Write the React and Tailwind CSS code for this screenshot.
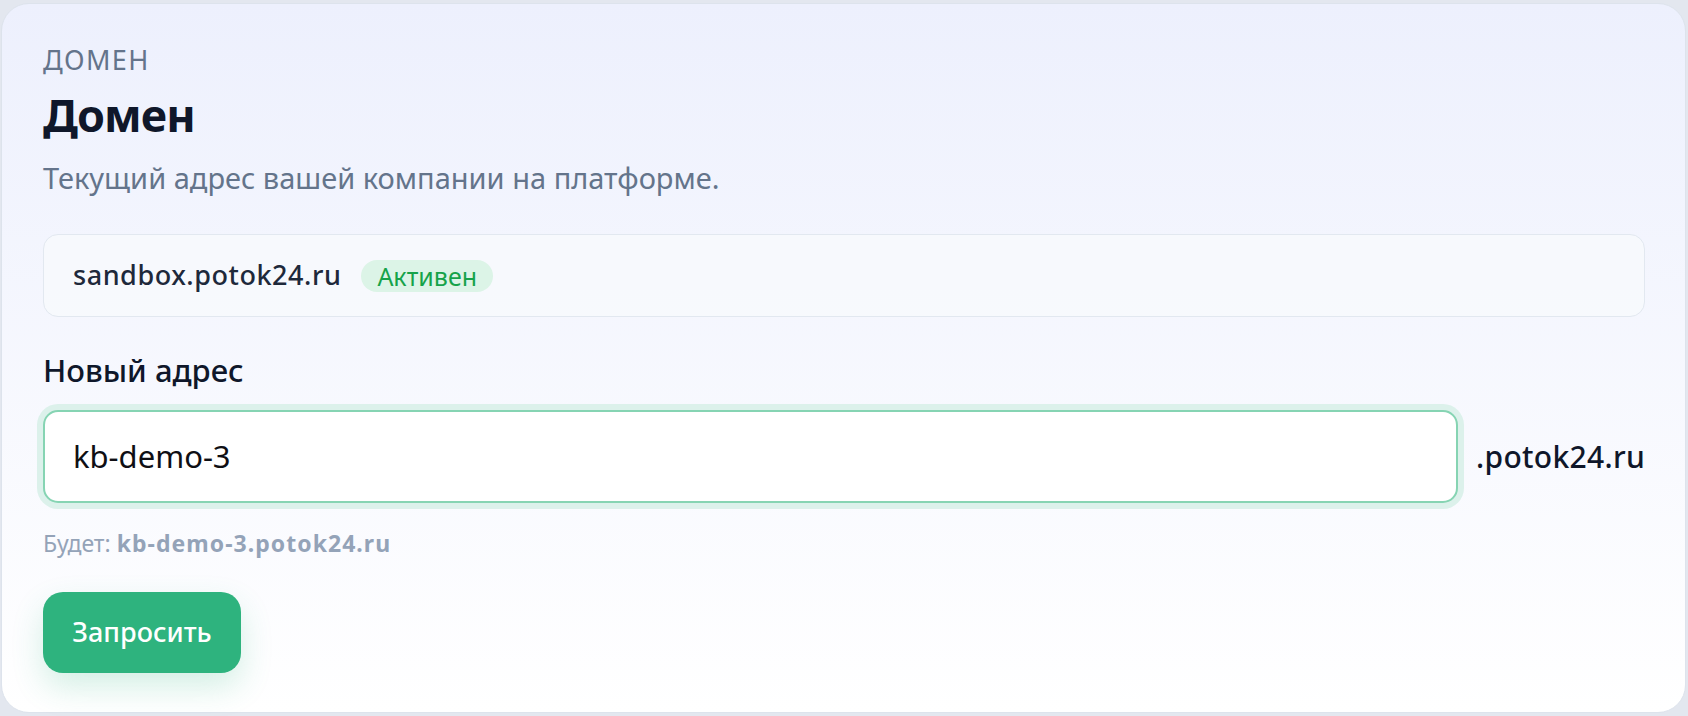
import React from "react";

export default function App() {
  return (
    <div
      className="w-[1688px] h-[716px] bg-[#e3e7ef] pt-[3px] pl-[1px] pr-[2px] pb-[3px]"
      style={{ fontFamily: '"Noto Sans", "Open Sans", sans-serif' }}
    >
      <div className="h-full rounded-[28px] border border-[#dde3ec] bg-gradient-to-b from-[#edf0fd] to-[#ffffff] pt-[42px] pl-[41px] pr-[40px] pb-[39px] flex flex-col">
        <div className="text-[27px] leading-[27px] tracking-[0.05em] text-[#64748b] uppercase">
          Домен
        </div>
        <h1 className="mt-[14px] text-[45px] leading-[55px] font-bold tracking-[-0.02em] text-[#0f172a]">
          Домен
        </h1>
        <p className="mt-[16px] text-[29px] leading-[39px] text-[#64748b]">
          Текущий адрес вашей компании на платформе.
        </p>

        <div className="mt-[37px] h-[83px] rounded-[15px] border border-[#e2e8f0] bg-[#f8fafc]/80 pl-[29px] flex items-center">
          <span className="text-[27px] font-medium tracking-[0.02em] text-[#1e293b]">
            sandbox.potok24.ru
          </span>
          <span className="ml-[20px] h-[32px] rounded-full bg-[#dcf4e7] px-[16px] text-[25px] leading-[32px] text-[#16a34a]">
            Активен
          </span>
        </div>

        <div className="mt-[34px] text-[31px] leading-[39px] font-medium text-[#0f172a]">
          Новый адрес
        </div>

        <div className="mt-[20px] flex items-center gap-[18px]">
          <div className="flex-1 h-[93px] rounded-[15px] border-2 border-[#86d4b3] bg-white shadow-[0_0_0_6px_#dcf1eb] pl-[28px] flex items-center">
            <span className="text-[31px] text-[#0f0f14]">kb-demo-3</span>
          </div>
          <span className="text-[30px] font-medium tracking-[0.01em] text-[#0f172a]">
            .potok24.ru
          </span>
        </div>

        <div className="mt-[24px] text-[23px] leading-[32px] text-[#94a3b8]">
          Будет:{" "}
          <span className="font-bold tracking-[0.045em]">kb-demo-3.potok24.ru</span>
        </div>

        <div className="mt-[33px]">
          <button className="h-[81px] w-[198px] rounded-[20px] bg-[#2eb37e] text-[27px] font-medium text-white shadow-[0_14px_32px_rgba(46,179,126,0.2)]">
            Запросить
          </button>
        </div>
      </div>
    </div>
  );
}
